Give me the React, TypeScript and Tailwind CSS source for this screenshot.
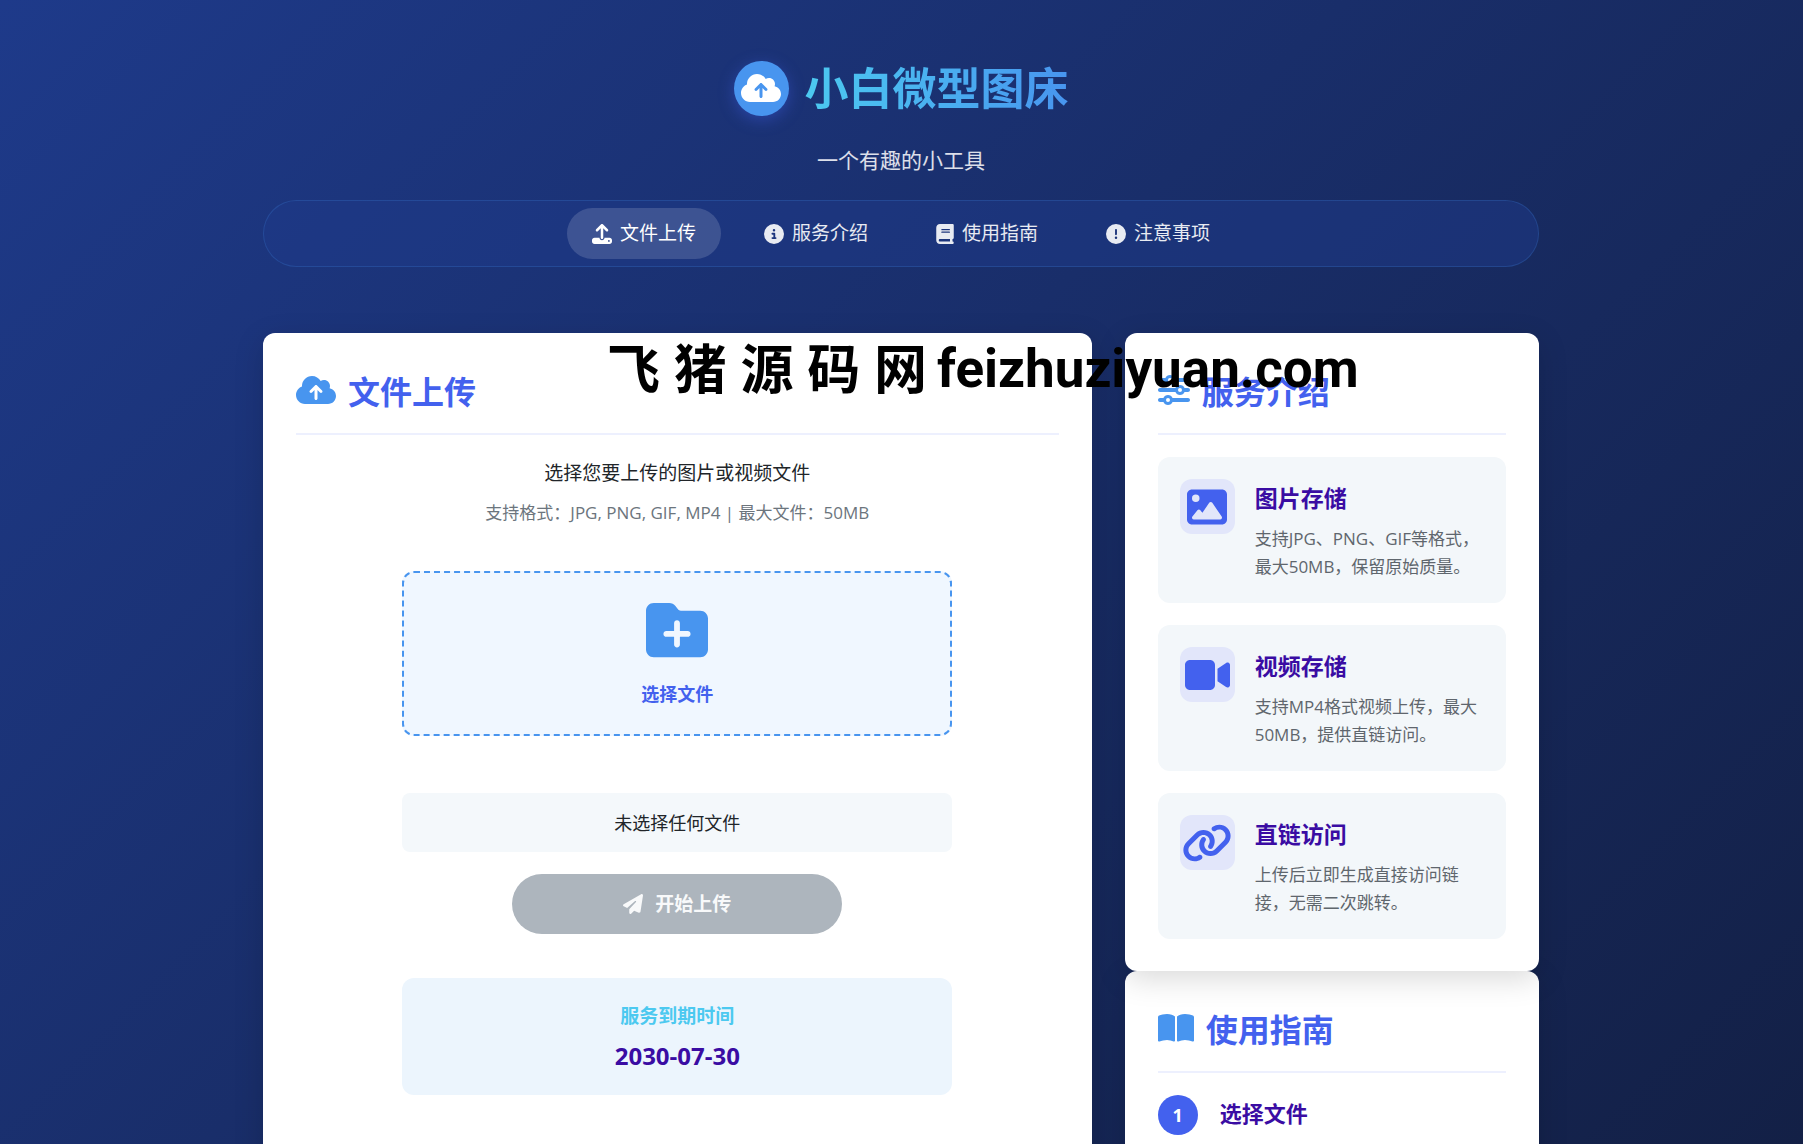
import React from "react";
import {
  FaBook,
  FaBookOpen,
  FaCircleExclamation,
  FaCircleInfo,
  FaCloudArrowUp,
  FaFolderPlus,
  FaImage,
  FaLink,
  FaPaperPlane,
  FaSliders,
  FaUpload,
  FaVideo,
} from "react-icons/fa6";

export default function App() {
  return (
    <div className="h-screen overflow-hidden bg-linear-135 from-[#1e3a8a] to-[#132046] pr-px font-['Open_Sans','Noto_Sans_CJK_SC',sans-serif] text-[#212529]">
      <div className="relative mx-auto max-w-[1320px] px-[22px] pt-[60px]">
        <Header />
        <Nav />
        <main className="grid grid-cols-1 gap-[33px] pt-[66px] lg:grid-cols-[2fr_1fr]">
          <UploadCard />
          <aside>
            <Services />
            <Guide />
          </aside>
        </main>
        <div className="pointer-events-none absolute top-[329px] left-[366px] z-20 flex items-center gap-[10px] text-black">
          <span className="text-[53px] leading-[80px] font-bold whitespace-nowrap">
            飞 猪 源 码 网
          </span>
          <span className="font-['Roboto',sans-serif] text-[53px] leading-[80px] font-bold">
            feizhuziyuan.com
          </span>
        </div>
      </div>
    </div>
  );
}

const Header = () => (
  <header className="text-center">
    <div className="flex h-[56px] items-center justify-center gap-4">
      <div className="flex size-[55px] items-center justify-center rounded-full bg-[#4895ef] text-white shadow-[0_4px_16px_rgba(67,97,238,0.4)]">
        <FaCloudArrowUp className="h-8 w-10" />
      </div>
      <h1 className="bg-linear-to-r from-[#4cc9f0] to-[#4895ef] bg-clip-text text-[44px] leading-[60px] font-bold text-transparent">
        小白微型图床
      </h1>
    </div>
    <p className="pt-[30px] text-[21px] leading-7 text-white/85">
      一个有趣的小工具
    </p>
  </header>
);

const Nav = () => (
  <nav className="mt-[26px] flex h-[67px] items-center justify-center gap-[18px] rounded-full border border-[#4895ef]/20 bg-[#1e3a8a]/50">
    {links.map((link, i) => (
      <a
        key={link.label}
        href={link.href}
        className={
          i === 0
            ? "flex h-[51px] items-center gap-2 rounded-full bg-white/15 px-[25px] text-[19px] text-white"
            : "flex h-[51px] items-center gap-2 rounded-full px-[25px] text-[19px] text-white/90"
        }
      >
        {link.icon}
        <span>{link.label}</span>
      </a>
    ))}
  </nav>
);

const CardTitle = ({
  icon,
  children,
}: {
  icon: React.ReactNode;
  children: React.ReactNode;
}) => (
  <h2 className="flex h-[69px] items-start gap-3 border-b-2 border-[#edf0fe] text-[32px] leading-[52px] font-bold text-[#4361ee]">
    <span className="flex h-[48px] items-center text-[#4895ef]">{icon}</span>
    {children}
  </h2>
);

const UploadCard = () => (
  <section
    id="upload"
    className="rounded-xl bg-white p-[33px] shadow-[0_8px_30px_rgba(0,0,0,0.15)]"
  >
    <CardTitle icon={<FaCloudArrowUp className="h-8 w-10" />}>
      文件上传
    </CardTitle>
    <div className="mx-auto flex max-w-[550px] flex-col items-center pt-[22px] text-center">
      <p className="text-[19px] leading-8">选择您要上传的图片或视频文件</p>
      <p className="pt-2 text-[17px] leading-8 text-[#6c757d]">
        支持格式：JPG, PNG, GIF, MP4 | 最大文件：50MB
      </p>
      <label
        htmlFor="file"
        className="mt-[42px] flex h-[165px] w-full cursor-pointer flex-col items-center rounded-xl border-2 border-dashed border-[#4895ef] bg-[#f0f7ff] pt-[26px]"
      >
        <FaFolderPlus className="size-[62px] text-[#4895ef]" />
        <span className="pt-[18px] text-[18px] leading-[30px] font-bold text-[#4361ee]">
          选择文件
        </span>
        <input id="file" type="file" className="sr-only" />
      </label>
      <div className="mt-[57px] h-[59px] w-full rounded-lg bg-[#f4f8fb] text-[18px] leading-[60px]">
        未选择任何文件
      </div>
      <button
        type="button"
        disabled
        className="mt-[22px] flex h-[60px] w-[330px] items-center justify-center gap-3 rounded-full bg-[#adb5bd] text-[19px] font-bold text-[#f8f9fa]"
      >
        <FaPaperPlane className="size-5" />
        开始上传
      </button>
      <div className="mt-11 h-[117px] w-full rounded-xl bg-[#ecf5fd] pt-[22px]">
        <p className="text-[19px] leading-8 font-bold text-[#4cc9f0]">
          服务到期时间
        </p>
        <p className="pt-2 text-[24px] leading-8 font-bold text-[#3a0ca3]">
          2030-07-30
        </p>
      </div>
    </div>
  </section>
);

const Services = () => (
  <section
    id="services"
    className="relative z-10 rounded-xl bg-white px-[33px] pt-[33px] pb-8 shadow-[0_8px_30px_rgba(0,0,0,0.15)]"
  >
    <CardTitle icon={<FaSliders className="size-8" />}>服务介绍</CardTitle>
    <div className="flex flex-col gap-[22px] pt-[22px]">
      {services.map((item) => (
        <div
          key={item.title}
          className="flex h-[146px] items-start gap-5 rounded-xl bg-[#f3f7fa] p-[22px]"
        >
          <div className="flex size-[55px] shrink-0 items-center justify-center rounded-xl bg-[#e2e6fa] text-[#4361ee]">
            {item.icon}
          </div>
          <div>
            <h3 className="text-[23px] leading-[38px] font-bold text-[#3a0ca3]">
              {item.title}
            </h3>
            <p className="pt-2 text-[17px] leading-7 text-[#5f666d]">
              {item.description}
            </p>
          </div>
        </div>
      ))}
    </div>
  </section>
);

const Guide = () => (
  <section
    id="guide"
    className="rounded-xl bg-white p-[33px] shadow-[0_8px_30px_rgba(0,0,0,0.15)]"
  >
    <CardTitle icon={<FaBookOpen className="h-8 w-9" />}>使用指南</CardTitle>
    <ol className="pt-[22px]">
      <li className="flex items-start gap-[22px]">
        <span className="flex size-10 items-center justify-center rounded-full bg-[#4361ee] text-[18px] font-bold text-white">
          1
        </span>
        <h3 className="text-[22px] leading-9 font-bold text-[#3a0ca3]">
          选择文件
        </h3>
      </li>
    </ol>
  </section>
);

const links = [
  {
    label: "文件上传",
    href: "#upload",
    icon: <FaUpload className="size-5" />,
  },
  {
    label: "服务介绍",
    href: "#services",
    icon: <FaCircleInfo className="size-5" />,
  },
  {
    label: "使用指南",
    href: "#guide",
    icon: <FaBook className="h-5 w-[18px]" />,
  },
  {
    label: "注意事项",
    href: "#notice",
    icon: <FaCircleExclamation className="size-5" />,
  },
];

const services = [
  {
    title: "图片存储",
    description: "支持JPG、PNG、GIF等格式，最大50MB，保留原始质量。",
    icon: <FaImage className="size-10" />,
  },
  {
    title: "视频存储",
    description: "支持MP4格式视频上传，最大50MB，提供直链访问。",
    icon: <FaVideo className="h-10 w-[45px]" />,
  },
  {
    title: "直链访问",
    description: "上传后立即生成直接访问链接，无需二次跳转。",
    icon: <FaLink className="h-10 w-[50px]" />,
  },
];
